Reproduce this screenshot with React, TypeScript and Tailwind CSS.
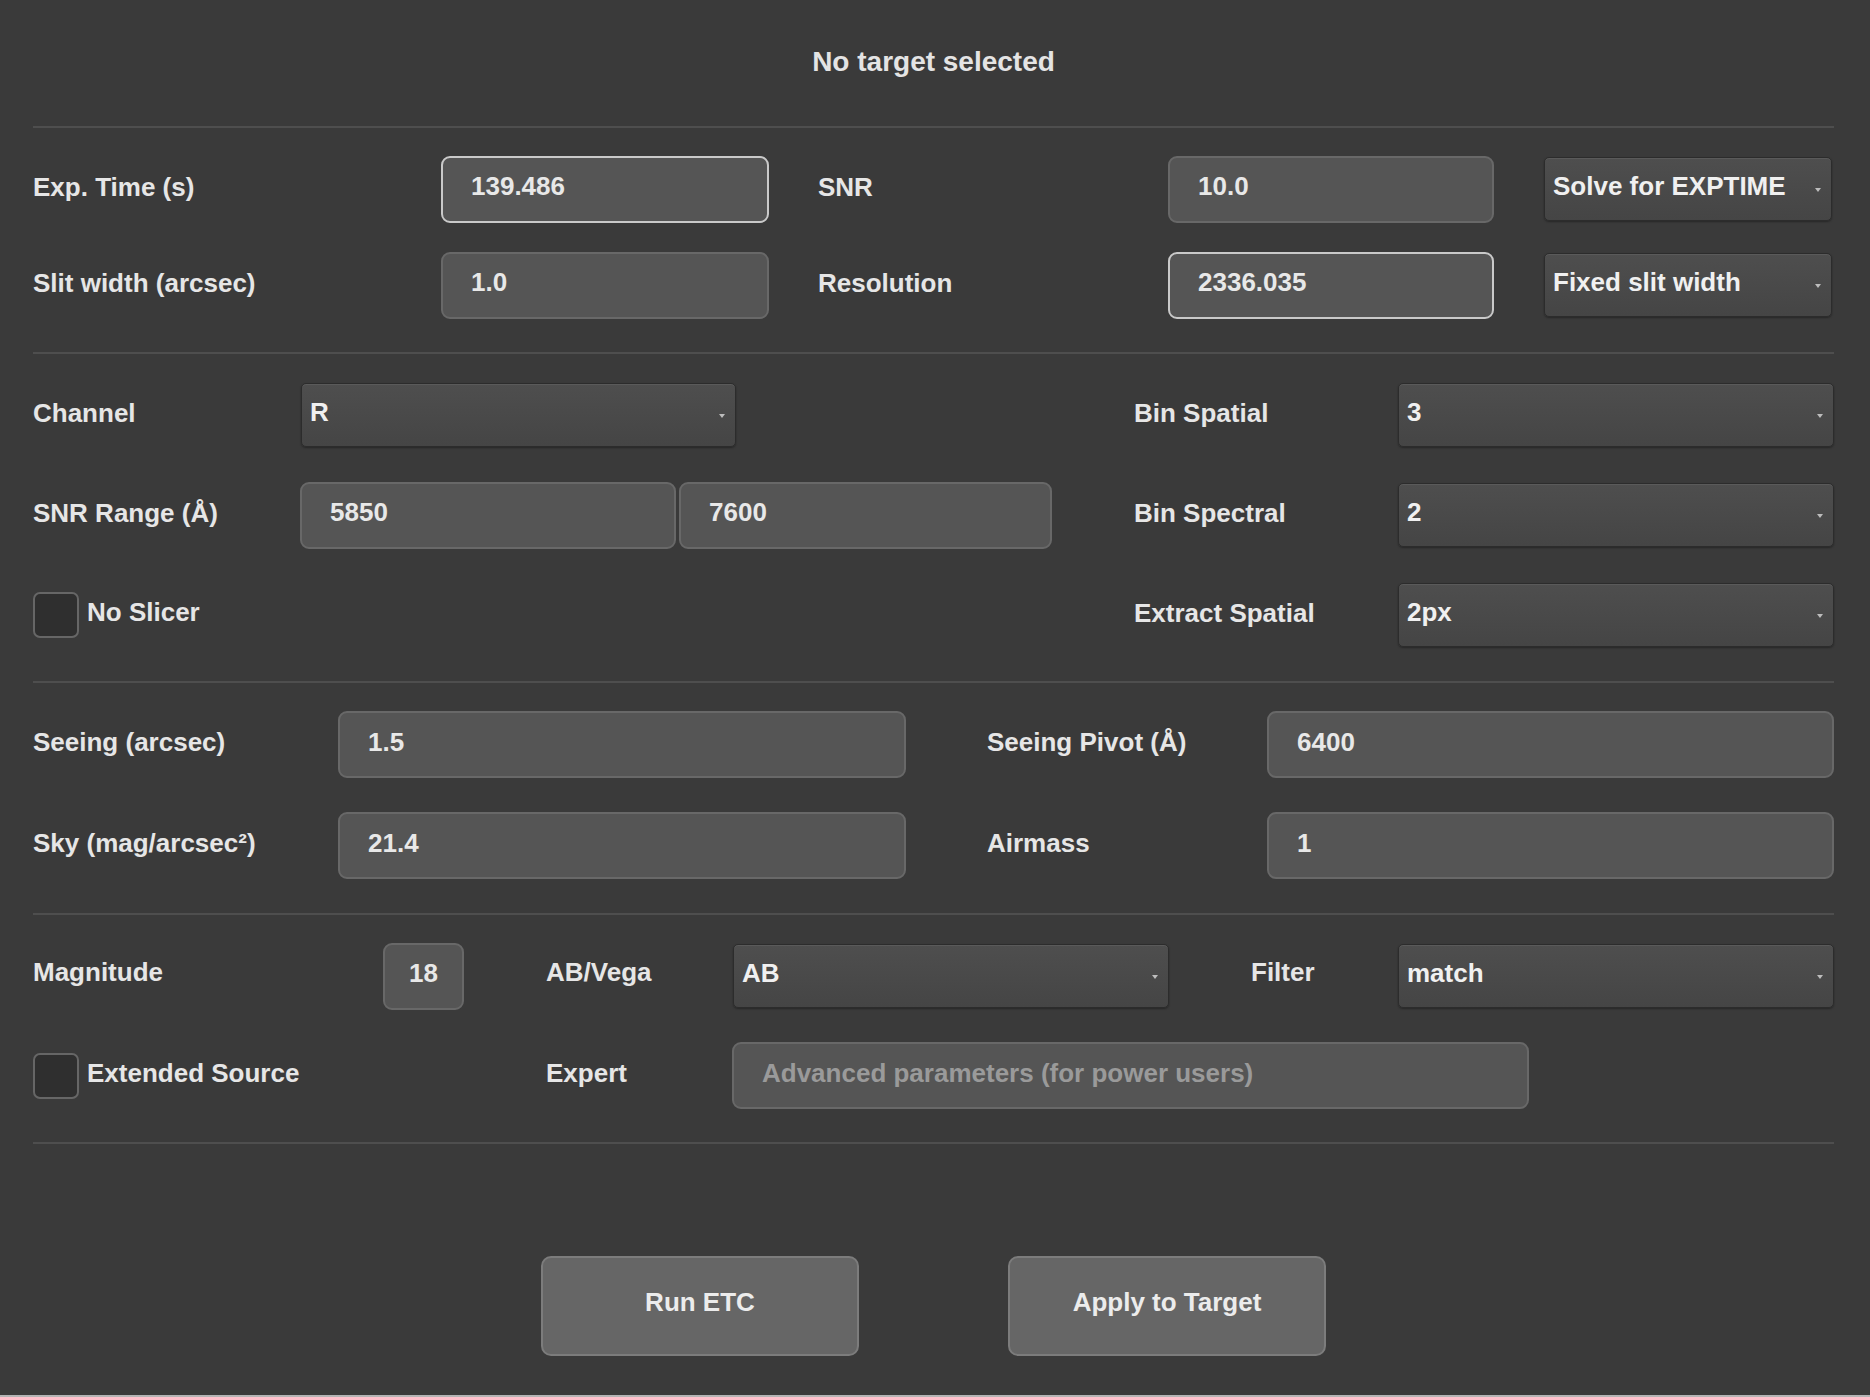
import type { ReactNode } from 'react'
import clsx from 'clsx'

const font = { fontFamily: '"Liberation Sans", Arial, sans-serif' }

export default function App() {
  return (
    <div
      className="flex h-[1397px] w-full flex-col border-b-2 border-[#b4b4b4] bg-[#3a3a3a] pl-[33px] pr-[36px] font-bold text-[#e8e8e8]"
      style={font}
    >
      <div className="flex h-[126px] items-center justify-center pb-[2px] text-[28px] text-[#e4e4e4]">
        No target selected
      </div>
      <Rule />

      {/* Exposure / SNR */}
      <section className="flex flex-col gap-[30px] pb-[34px] pt-[28px]">
        <div className="flex h-[66px] items-center">
          <Label className="w-[408px]">Exp. Time (s)</Label>
          <TextInput className="w-[328px]" value="139.486" highlight />
          <Label className="ml-[49px] w-[350px]">SNR</Label>
          <TextInput className="w-[326px]" value="10.0" />
          <Select className="ml-[50px] w-[288px]" value="Solve for EXPTIME" />
        </div>
        <div className="flex h-[66px] items-center">
          <Label className="w-[408px]">Slit width (arcsec)</Label>
          <TextInput className="w-[328px]" value="1.0" />
          <Label className="ml-[49px] w-[350px]">Resolution</Label>
          <TextInput className="w-[326px]" value="2336.035" highlight />
          <Select className="ml-[50px] w-[288px]" value="Fixed slit width" />
        </div>
      </section>
      <Rule />

      {/* Channel / binning */}
      <section className="flex flex-col gap-[36px] pb-[34px] pt-[29px]">
        <div className="flex h-[64px] items-center">
          <div className="flex w-[1101px] items-center">
            <Label className="w-[268px]">Channel</Label>
            <Select className="w-[435px]" value="R" />
          </div>
          <Label className="w-[264px]">Bin Spatial</Label>
          <Select className="flex-1" value="3" />
        </div>
        <div className="flex h-[64px] items-center">
          <div className="flex w-[1101px] items-center">
            <Label className="w-[267px]">SNR Range (Å)</Label>
            <TextInput className="w-[376px]" value="5850" />
            <TextInput className="ml-[3px] w-[373px]" value="7600" />
          </div>
          <Label className="w-[264px]">Bin Spectral</Label>
          <Select className="flex-1" value="2" />
        </div>
        <div className="flex h-[64px] items-center">
          <div className="flex w-[1101px] items-center">
            <Checkbox label="No Slicer" />
          </div>
          <Label className="w-[264px]">Extract Spatial</Label>
          <Select className="flex-1" value="2px" />
        </div>
      </section>
      <Rule />

      {/* Conditions */}
      <section className="flex flex-col gap-[34px] pb-[34px] pt-[28px]">
        <div className="flex h-[67px] items-center">
          <Label className="w-[305px]">Seeing (arcsec)</Label>
          <TextInput className="w-[568px]" value="1.5" />
          <Label className="ml-[81px] w-[280px]">Seeing Pivot (Å)</Label>
          <TextInput className="flex-1" value="6400" />
        </div>
        <div className="flex h-[67px] items-center">
          <Label className="w-[305px]">Sky (mag/arcsec²)</Label>
          <TextInput className="w-[568px]" value="21.4" />
          <Label className="ml-[81px] w-[280px]">Airmass</Label>
          <TextInput className="flex-1" value="1" />
        </div>
      </section>
      <Rule />

      {/* Source */}
      <section className="flex flex-col gap-[33px] pb-[33px] pt-[28px]">
        <div className="flex h-[66px] items-center">
          <Label className="mb-[8px] w-[350px]">Magnitude</Label>
          <TextInput className="w-[81px] justify-center !px-0" value="18" />
          <Label className="mb-[8px] ml-[82px] w-[187px]">AB/Vega</Label>
          <Select className="w-[436px]" value="AB" />
          <Label className="mb-[8px] ml-[82px] w-[147px]">Filter</Label>
          <Select className="flex-1" value="match" />
        </div>
        <div className="flex h-[67px] items-center">
          <div className="flex w-[513px] items-center">
            <Checkbox label="Extended Source" />
          </div>
          <Label className="w-[186px]">Expert</Label>
          <TextInput
            className="w-[797px]"
            value="Advanced parameters (for power users)"
            placeholder
          />
        </div>
      </section>
      <Rule />

      <div className="flex justify-center gap-[149px] pt-[112px]">
        <Button>Run ETC</Button>
        <Button>Apply to Target</Button>
      </div>
    </div>
  )
}

function Rule() {
  return <div className="h-[2px] w-full bg-[#4e4e4e]" />
}

function Label({ className, children }: { className?: string; children: ReactNode }) {
  return (
    <span
      className={clsx(
        'shrink-0 whitespace-nowrap text-[26px] leading-none text-[#e6e6e6]',
        className?.includes('mb-') ? '' : 'mb-[5px]',
        className,
      )}
    >
      {children}
    </span>
  )
}

function TextInput({
  className,
  value,
  highlight,
  placeholder,
}: {
  className?: string
  value: string
  highlight?: boolean
  placeholder?: boolean
}) {
  return (
    <div
      className={clsx(
        'flex h-[67px] shrink-0 items-center rounded-[9px] border-2 bg-[#555555] px-[28px] pb-[5px] text-[26px]',
        highlight ? 'border-[#c9c9c9]' : 'border-[#686868]',
        placeholder ? 'text-[#9a9a9a]' : 'text-[#e8e8e8]',
        className,
      )}
    >
      {value}
    </div>
  )
}

function Select({ className, value }: { className?: string; value: string }) {
  return (
    <div
      className={clsx(
        'flex h-[64px] shrink-0 items-center justify-between rounded-[5px] border border-[#2c2c2c] bg-gradient-to-b from-[#4e4e4e] to-[#454545] pl-[8px] pr-[10px] text-[26px] text-[#f0f0f0] shadow-[inset_0_1px_0_#5a5a5a,0_1px_2px_rgba(0,0,0,0.35)]',
        className,
      )}
    >
      <span className="mb-[5px]">{value}</span>
      <svg width="6" height="4" viewBox="0 0 6 4" className="mt-[2px]">
        <path d="M0 0h6L3 4z" fill="#bdbdbd" />
      </svg>
    </div>
  )
}

function Checkbox({ label }: { label: string }) {
  return (
    <label className="flex items-center">
      <span className="h-[46px] w-[46px] rounded-[7px] border-2 border-[#666] bg-[#2f2f2f]" />
      <span className="mb-[5px] ml-[8px] text-[26px] text-[#e6e6e6]">{label}</span>
    </label>
  )
}

function Button({ children }: { children: ReactNode }) {
  return (
    <button className="flex h-[100px] w-[318px] items-center justify-center rounded-[10px] border-2 border-[#7c7c7c] bg-[#666666] pb-[7px] text-[26px] font-bold text-[#ececec]">
      {children}
    </button>
  )
}
